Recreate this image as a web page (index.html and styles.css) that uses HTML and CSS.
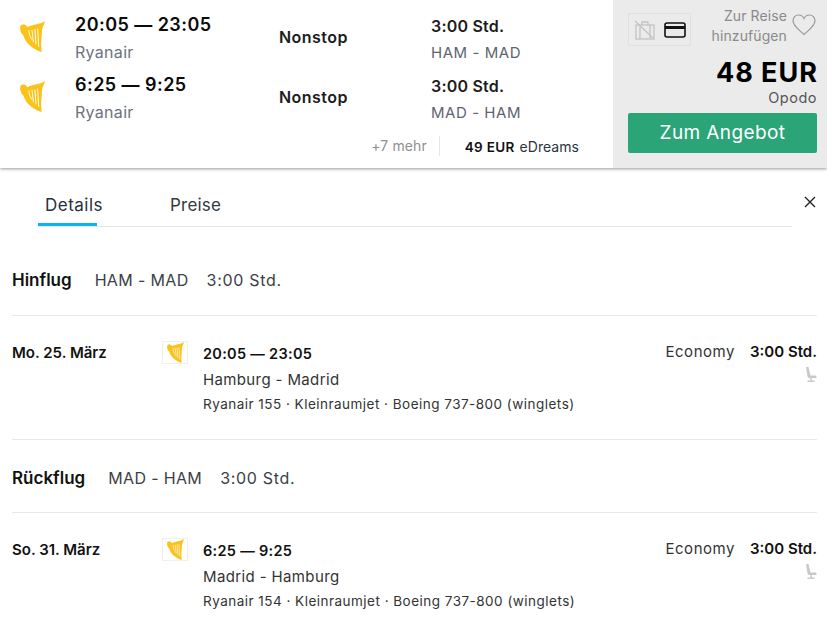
FILE: index.html
```html
<!DOCTYPE html>
<html lang="de">
<head>
<meta charset="utf-8">
<title>Flug</title>
<link rel="stylesheet" href="styles.css">
</head>
<body>
<svg class="defs" width="0" height="0" aria-hidden="true">
  <symbol id="harp" viewBox="0 0 24 30">
    <path fill="#fbc31a" d="M0 6.500C0 4 2 2.800 4 3.500 5.500 4 6.500 5 7 6 11 3.500 19 3.500 24 0 23.500 3 22 5 21.300 8L20.300 22 20.800 30C13 27.500 5 21.500 3.200 14 1 12.500 0 9.500 0 6.500z"/>
    <path fill="none" stroke="#fff" stroke-width=".9" d="M8.500 9C8.500 12 9.500 15.500 11.500 18M11.500 8.500l1.400 12M14.300 8l1.100 14.500M17 7.300l1 17.700"/>
  </symbol>
  <symbol id="seat" viewBox="0 0 12 16">
    <path fill="#c9c9c9" d="M1 0h2.500l2 8.500H10c1 0 1.500.7 1.500 1.500v1H6.800v2.500H9.500V15H2.500v-1.500h2.800V11H3.800C3 11 2.800 10.500 2.600 9.800z"/>
  </symbol>
</svg>
<section class="result">
  <div class="legs">
    <div class="leg">
      <svg class="logo"><use href="#harp"/></svg>
      <div class="times"><div class="clock">20:05 — 23:05</div><div class="carrier">Ryanair</div></div>
      <div class="stops">Nonstop</div>
      <div class="dur"><div class="dur-time">3:00 Std.</div><div class="route">HAM - MAD</div></div>
    </div>
    <div class="leg">
      <svg class="logo"><use href="#harp"/></svg>
      <div class="times"><div class="clock">6:25 — 9:25</div><div class="carrier">Ryanair</div></div>
      <div class="stops">Nonstop</div>
      <div class="dur"><div class="dur-time">3:00 Std.</div><div class="route">MAD - HAM</div></div>
    </div>
    <div class="others">
      <span class="more">+7 mehr</span>
      <span class="alt"><b>49 EUR</b> eDreams</span>
    </div>
  </div>
  <aside class="offer">
    <div class="offer-top">
      <div class="fees">
        <svg width="22" height="20" viewBox="0 0 22 20" fill="none" stroke="#c4c4c4" stroke-width="1.300"><rect x="2" y="5" width="18" height="14"/><path d="M8 5V2h6v3M6 5v14M16 5v14M1 1l19 18"/></svg>
        <svg width="22" height="16" viewBox="0 0 22 16" fill="none" stroke="#111" stroke-width="1.600"><rect x="1" y="1" width="20" height="14" rx="2"/><path d="M1 5.500h20" stroke-width="3"/></svg>
      </div>
      <div class="save">Zur Reise<br>hinzufügen</div>
      <svg class="heart" width="24" height="22" viewBox="0 0 24 22" fill="none" stroke="#9a9a9a" stroke-width="1.200"><path d="M12 20.500C7 16 1 12 1 6.800 1 3.500 3.500 1 6.500 1 9 1 11 2.300 12 4.500 13 2.300 15 1 17.500 1 20.500 1 23 3.500 23 6.800 23 12 17 16 12 20.500z"/></svg>
    </div>
    <div class="price">48 EUR</div>
    <div class="seller">Opodo</div>
    <div class="cta">Zum Angebot</div>
  </aside>
</section>
<section class="details">
  <div class="tabbar">
    <div class="tabs">
      <div class="tab active">Details</div>
      <div class="tab">Preise</div>
    </div>
    <svg class="close" width="12" height="12" viewBox="0 0 12 12" stroke="#222" stroke-width="1.400"><path d="M1 1l10 10M11 1L1 11"/></svg>
  </div>
  <div class="head first"><b>Hinflug</b><span>HAM - MAD</span><span class="head-time">3:00 Std.</span></div>
  <div class="seg">
    <div class="date">Mo. 25. März</div>
    <div class="logobox"><svg><use href="#harp"/></svg></div>
    <div class="info">
      <div class="info-time">20:05 — 23:05</div>
      <div class="info-route">Hamburg - Madrid</div>
      <div class="info-plane">Ryanair 155 · Kleinraumjet · Boeing 737-800 (winglets)</div>
    </div>
    <div class="side">
      <div class="side-row"><span>Economy</span><b>3:00 Std.</b></div>
      <svg class="seat"><use href="#seat"/></svg>
    </div>
  </div>
  <div class="head"><b>Rückflug</b><span>MAD - HAM</span><span class="head-time">3:00 Std.</span></div>
  <div class="seg last">
    <div class="date">So. 31. März</div>
    <div class="logobox"><svg><use href="#harp"/></svg></div>
    <div class="info">
      <div class="info-time">6:25 — 9:25</div>
      <div class="info-route">Madrid - Hamburg</div>
      <div class="info-plane">Ryanair 154 · Kleinraumjet · Boeing 737-800 (winglets)</div>
    </div>
    <div class="side">
      <div class="side-row"><span>Economy</span><b>3:00 Std.</b></div>
      <svg class="seat"><use href="#seat"/></svg>
    </div>
  </div>
</section>
</body>
</html>
```
FILE: styles.css
```css
* { box-sizing: border-box; }
html, body { margin: 0; height: 633px; overflow: hidden; background: #fff; }
body { font-family: Inter, "Liberation Sans", sans-serif; color: #1c1c1c; width: 827px; }
b { font-weight: 600; }
.defs { display: block; height: 0; }

.result { display: flex; height: 168px; box-shadow: 0 1px 3px rgba(0,0,0,.4); }
.legs { width: 613px; padding: 11px 0 0 20px; }
.leg { display: flex; height: 60px; }
.logo { width: 25px; height: 31px; margin-top: 10px; flex: none; }
.times { width: 204px; margin-left: 30px; }
.clock { font-size: 18px; line-height: 28px; font-weight: 600; color: #0b0b0b; letter-spacing: .45px; }
.carrier { font-size: 16px; line-height: 26px; color: #6d7280; letter-spacing: .3px; }
.stops { width: 152px; font-size: 16px; font-weight: 600; line-height: 24px; margin-top: 14px; letter-spacing: .45px; }
.dur-time { font-size: 16px; font-weight: 600; line-height: 24px; margin-top: 3px; letter-spacing: .2px; }
.route { font-size: 15px; line-height: 28px; margin-top: 1px; color: #5c6472; letter-spacing: .55px; }
.others { display: flex; justify-content: flex-end; align-items: center; height: 20px; margin-top: 5px; padding-right: 34px; font-size: 14px; }
.more { color: #8d8f92; padding-right: 12px; border-right: 1px solid #e6e6e6; line-height: 20px; letter-spacing: .1px; }
.alt { margin-left: 25px; color: #2b3440; letter-spacing: .05px; }
.alt b { color: #111; font-size: 13.500px; margin-right: 1px; letter-spacing: .3px; }

.offer { width: 214px; background: #ebebeb; padding: 10px 10px 0 15px; display: flex; flex-direction: column; }
.offer-top { display: flex; align-items: flex-start; height: 37px; }
.fees { width: 63px; flex: none; height: 33px; margin-top: 3px; border: 1px solid #e0e0e0; border-radius: 2px; display: flex; align-items: center; justify-content: center; gap: 8px; }
.save { width: 96px; flex: none; text-align: right; font-size: 14px; line-height: 20px; color: #8a8a8a; margin-top: -4px; letter-spacing: .1px; }
.heart { margin: 4px 0 0 5px; flex: none; }
.price { margin-top: 10px; text-align: right; font-size: 27px; line-height: 32px; font-weight: 700; color: #000; letter-spacing: 1px; margin-right: -1px; }
.seller { text-align: right; font-size: 14.500px; line-height: 18px; color: #555; letter-spacing: .5px; }
.cta { margin-top: 6px; height: 40px; background: #2ba478; border-radius: 2px; color: #fff; font-size: 19px; line-height: 40px; text-align: center; letter-spacing: .4px; }

.details { padding-left: 12px; padding-right: 10px; }
.tabbar { display: flex; align-items: flex-start; height: 59px; margin-left: 26px; margin-right: -10px; }
.tabs { display: flex; width: 754px; height: 59px; border-bottom: 1px solid #e6e6e6; }
.tab { font-size: 17px; line-height: 24px; padding-top: 25px; height: 58px; color: #333a44; letter-spacing: .2px; white-space: nowrap; }
.tab:nth-child(1) { width: 59px; padding-left: 7px; color: #27303c; border-bottom: 3px solid #0bb5ea; letter-spacing: .5px; }
.tab:nth-child(2) { margin-left: 73px; }
.close { margin: 28px 0 0 12px; flex: none; }

.head { display: flex; align-items: center; height: 73px; font-size: 16px; color: #3b3f48; letter-spacing: .35px; border-bottom: 1px solid #e8e8e8; padding-top: 4px; }
.head.first { height: 89px; padding-top: 35px; padding-bottom: 17px; }
.head b { color: #111; letter-spacing: 0; margin-right: 23px; font-size: 17px; }
.head-time { margin-left: 18px; letter-spacing: .7px; }
.seg { display: flex; height: 124px; border-bottom: 1px solid #e8e8e8; padding-top: 25px; }
.seg.last { border-bottom: 0; }
.date { width: 150px; font-size: 15px; font-weight: 600; color: #111; line-height: 24px; }
.logobox { width: 26px; height: 23px; border: 1px solid #efefef; display: flex; align-items: center; justify-content: center; }
.logobox svg { width: 17px; height: 21px; }
.info { margin-left: 15px; width: 400px; }
.info-time { font-size: 14.500px; font-weight: 600; color: #111; line-height: 26px; letter-spacing: .3px; }
.info-route { font-size: 15px; line-height: 26px; color: #333; letter-spacing: .37px; }
.info-plane { font-size: 13.500px; line-height: 24px; margin-top: -1px; color: #333; white-space: nowrap; letter-spacing: .48px; }
.side { margin-left: auto; display: flex; flex-direction: column; align-items: flex-end; margin-top: -1px; }
.side-row { font-size: 15px; line-height: 24px; color: #333; display: flex; gap: 15px; }
.side-row span { letter-spacing: .55px; }
.side-row b { color: #111; }
.seat { width: 12px; height: 16px; margin-top: 3px; }
```
